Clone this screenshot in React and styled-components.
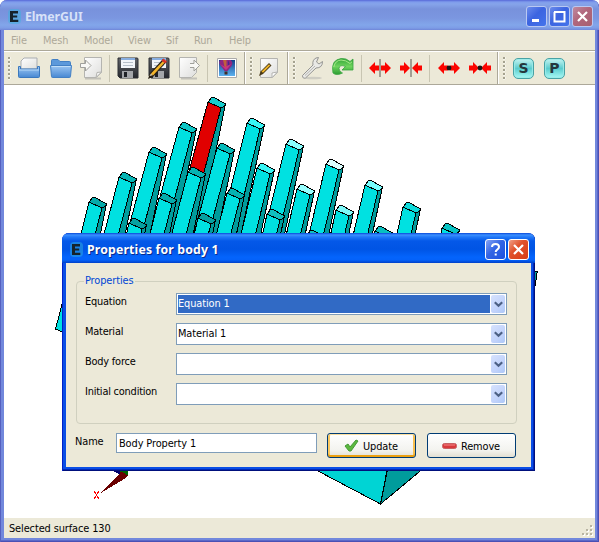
import React from "react";
import styled, { createGlobalStyle, css } from "styled-components";

const Global = createGlobalStyle`
  * { box-sizing: border-box; }
  body { margin: 0; background: #fff; overflow: hidden; }
  button, input { font: inherit; }
`;

const Window = styled.div`
  position: relative;
  width: 599px;
  height: 542px;
  display: flex;
  flex-direction: column;
  padding: 0 4px 4px;
  border-radius: 7px 7px 0 0;
  background: #7288dc;
  box-shadow: inset 1px 0 #5560c0, inset -1px -1px #4a50b4, inset -2px -2px #5c68c8;
  font: 10.9px/14px "DejaVu Sans Condensed", "DejaVu Sans", sans-serif;
  font-stretch: condensed;
  letter-spacing: -0.1px;
  color: #000;
  overflow: hidden;
`;

const TitleBar = styled.header`
  display: flex;
  align-items: center;
  flex: none;
  height: 30px;
  margin: 0 -4px;
  padding: 3px 6px 0 8px;
  border-radius: 7px 7px 0 0;
  color: #d8e2f8;
  background: linear-gradient(#5768d8 0, #7f9cec 2px, #86a4ea 4px, #7892dc 9px, #7b96e0 18px, #82a6ea 25px, #7d9ce6 28px, #6f86d8 30px);
`;

const Title = styled.h1`
  flex: 1;
  margin: 1px 0 0 4px;
  font: bold 12.3px/16px "Noto Sans", "Open Sans", sans-serif;
  font-stretch: normal;
  letter-spacing: ${(p) => p.$spacing || "0.15px"};
  ${(p) => p.$active && css`color: #fff; text-shadow: 1px 1px #0a2a8c;`}
`;

const CaptionButton = styled.button`
  display: grid;
  place-items: center;
  width: 21px;
  height: 21px;
  margin-left: 2px;
  padding: 0;
  border: 1px solid ${(p) => (p.$active ? "#fff" : "#b9c8f2")};
  border-radius: 3px;
  background: ${(p) =>
    p.$close
      ? p.$active
        ? "linear-gradient(135deg, #f0a088, #e0522c 40%, #d83c14)"
        : "linear-gradient(135deg, #c08aa0, #b0667c 45%, #a86070)"
      : p.$active
        ? "linear-gradient(135deg, #86a4f4, #3465e4 45%, #1c50e0)"
        : "linear-gradient(135deg, #6c8cec, #3c64e0 45%, #4474ec)"};
`;

const MenuBar = styled.nav`
  display: flex;
  flex: none;
  height: 21px;
  padding: 4px 0 0 7px;
  background: #ece9d8;
  border-bottom: 1px solid #aca899;
  color: #aca899;
`;

const MenuItem = styled.span`
  width: ${(p) => p.$w}px;
  flex: none;
  white-space: nowrap;
`;

const ToolBars = styled.div`
  display: flex;
  flex: none;
  height: 34px;
  background: #ece9d8;
  border-top: 1px solid #fff;
  border-bottom: 1px solid #aca899;
`;

const ToolGroup = styled.div`
  display: flex;
  align-items: center;
  width: ${(p) => p.$w}px;
  padding-left: 4px;
  border-right: ${(p) => (p.$last ? "0" : "1px solid #aca899")};
  border-left: ${(p) => (p.$first ? "0" : "1px solid #fff")};
`;

const Handle = styled.span`
  width: 3px;
  height: 23px;
  flex: none;
  margin-right: ${(p) => p.$gap}px;
  background: radial-gradient(circle at 1px 1px, #a5a28f 1px, #fff 1.2px, transparent 2px) 0 0 / 3px 4px;
`;

const Tool = styled.span`
  display: grid;
  place-items: center;
  width: ${(p) => p.$w || 31}px;
  height: 26px;
  flex: none;
`;

const Separator = styled.span`
  width: 1px;
  height: 27px;
  flex: none;
  margin: 0 ${(p) => p.$r ?? 3}px 0 ${(p) => p.$l ?? 3}px;
  background: #c8c5b2;
`;

const Viewport = styled.main`
  flex: 1;
  min-height: 0;
  background: #fff;
  svg { display: block; }
`;

const StatusBar = styled.footer`
  display: flex;
  flex: none;
  justify-content: space-between;
  height: 20px;
  padding: 4px 1px 0 5px;
  background: #ece9d8;
`;

const Dialog = styled.section`
  position: absolute;
  left: 62px;
  top: 233px;
  width: 473px;
  height: 238px;
  display: flex;
  flex-direction: column;
  padding: 0 4px 4px;
  border-radius: 7px 7px 0 0;
  background: #0a4ee6;
  box-shadow: inset 1px 0 #0020c8, inset -1px -1px #00107c, inset -2px -2px #0028b8;
`;

const DialogTitle = styled(TitleBar)`
  background: linear-gradient(#0848d8 0, #3c90ff 2px, #2078f8 4px, #0458e8 8px, #0054e4 16px, #0464fc 24px, #0462fa 27px, #0040c8 30px);
`;

const DialogBody = styled.div`
  flex: 1;
  padding: 11px 14px 0 10px;
  background: #ece9d8;
`;

const Group = styled.fieldset`
  height: 150px;
  margin: 0;
  padding: 0 9px 0 8px;
  border: 1px solid #d0d0bf;
  border-radius: 4px;
`;

const Legend = styled.legend`
  height: 14px;
  margin-bottom: 5px;
  margin-left: -1px;
  padding: 0 2px 0 1px;
  color: #0046d5;
`;

const Field = styled.label`
  display: grid;
  grid-template-columns: 91px 331px;
  height: 30px;
  align-items: start;
`;

const FieldName = styled.span`
  padding-top: 2px;
  letter-spacing: -0.2px;
`;

const Select = styled.span`
  display: flex;
  height: 22px;
  padding: 1px;
  border: 1px solid #7f9db9;
  background: #fff;
`;

const SelectValue = styled.span`
  flex: 1;
  padding: 2px 0 0 0;
  margin-right: 1px;
  ${(p) => p.$selected && css`background: #316ac5; color: #fff;`}
`;

const Arrow = styled.span`
  display: grid;
  place-items: center;
  width: 14px;
  border-radius: 2px;
  background: linear-gradient(135deg, #d6e2fd, #c2d3fb 60%, #adc8f7);
`;

const Actions = styled.div`
  display: flex;
  align-items: flex-start;
  padding-top: 9px;
`;

const NameLabel = styled.label`
  width: 40px;
  padding-top: 2px;
  margin-left: -1px;
`;

const NameInput = styled.input`
  width: 201px;
  height: 20px;
  margin-left: 1px;
  padding: 0 2px;
  border: 1px solid #7f9db9;
  border-radius: 0;
  outline: 0;
  letter-spacing: inherit;
`;

const PushButton = styled.button`
  display: flex;
  align-items: center;
  justify-content: center;
  gap: 4px;
  width: 89px;
  height: 25px;
  margin: 0 1px 0 10px;
  padding: 0 1px 0 0;
  border: 1px solid #003c74;
  border-radius: 3px;
  color: #000;
  letter-spacing: inherit;
  background: linear-gradient(#fff, #f3f3ef 70%, #e2dfd2);
  line-height: 23px;
  svg { flex: none; }
  ${(p) => p.$default && css`box-shadow: inset 0 1px #fde0a0, inset 0 -2px #eba010, inset 2px 0 #fac860, inset -2px 0 #f8c050;`}
`;

const ButtonText = styled.span`
  padding-top: 1px;
`;

const AppIcon = () => (
  <svg width="13" height="15" viewBox="0 0 13 15">
    <rect width="13" height="15" rx="4" fill="#36b6dd" opacity=".45" />
    <path d="M2 2h8v2.4H5v2h4.2v2.2H5v2.2h5.3V13H2z" fill="#15232c" />
  </svg>
);

const Glyph = ({ kind }) => (
  <svg width="15" height="15" viewBox="0 0 15 15" fill="none" stroke="#fff" strokeWidth="2">
    {kind === "min" && <path d="M3 11.5h7" strokeWidth="3" />}
    {kind === "max" && <path d="M2.5 3v9.5h10V2M2 3h11" />}
    {kind === "close" && <path d="M3 3l9 9M12 3l-9 9" strokeWidth="2.2" />}
    {kind === "help" && <path d="M4 5c0-4 7-4 7 0 0 2.5-3.3 2.5-3.3 5M7.7 11.5v2" />}
  </svg>
);

const Icon = ({ children }) => (
  <svg width="24" height="24" viewBox="0 0 24 24">{children}</svg>
);

const DefsHolder = styled.svg`
  position: absolute;
`;

const Defs = () => (
  <DefsHolder width="0" height="0">
    <defs>
      <linearGradient id="blue" x2="0" y2="1"><stop stopColor="#9cc6f3" /><stop offset="1" stopColor="#4788d2" /></linearGradient>
      <linearGradient id="paper" x2="1" y2="1"><stop stopColor="#fff" /><stop offset="1" stopColor="#dededc" /></linearGradient>
      <linearGradient id="disk" x2="0" y2="1"><stop stopColor="#62656b" /><stop offset="1" stopColor="#24262c" /></linearGradient>
      <linearGradient id="green" x2="0" y2="1"><stop stopColor="#2fa236" /><stop offset=".5" stopColor="#6fd45e" /><stop offset="1" stopColor="#2c9c31" /></linearGradient>
      <linearGradient id="sky" x2="0" y2="1"><stop stopColor="#123e8a" /><stop offset="1" stopColor="#5cb2ef" /></linearGradient>
    </defs>
  </DefsHolder>
);

const OpenIcon = () => (
  <Icon>
    <path d="M4 13V5l3-3h13v11z" fill="url(#paper)" stroke="#a9adb2" />
    <path d="M1.5 10.5h2V13h17v-2.5h2v10q0 1-1 1h-19q-1 0-1-1z" fill="url(#blue)" stroke="#3b78bd" />
    <path d="M2 14h20" stroke="#b8d9f8" />
  </Icon>
);
const FolderIcon = () => (
  <Icon>
    <path d="M2.5 12V4.5q0-1 1-1H9l2 2h9.5q1 0 1 1V12" fill="#5c99db" stroke="#4380c4" />
    <path d="M1.5 9.5h21l-1 11q0 1-1 1h-17q-1 0-1-1z" fill="url(#blue)" stroke="#4380c4" />
    <path d="M2.5 10.5h19" stroke="#c0def9" />
  </Icon>
);
const ImportIcon = () => (
  <Icon>
    <path d="M5 22.5h16" stroke="#999" opacity=".5" strokeWidth="2" />
    <path d="M4.5 1.5h17v15l-5 5h-12z" fill="url(#paper)" stroke="#b4b4b0" />
    <path d="M21.5 16l-5.500 5.500 1-5z" fill="#f8f8f8" stroke="#b4b4b0" />
    <path d="M.5 7.500h5V4l5.500 5.500-5.500 5.500V11.500h-5z" fill="#f8f8f5" stroke="#a0a09b" />
  </Icon>
);
const ExportIcon = () => (
  <Icon>
    <path d="M3 22.5h16" stroke="#999" opacity=".5" strokeWidth="2" />
    <path d="M1.5 1.500h17v15l-5 5h-12z" fill="url(#paper)" stroke="#b4b4b0" />
    <path d="M12 7.500h4V4l5.500 5.500-5.500 5.500V11.500h-4" fill="#f8f8f5" stroke="#a0a09b" />
  </Icon>
);
const Pencil = ({ transform }) => (
  <g transform={transform}>
    <path d="M2 22l2-6L17 2l3.500 3L7.500 19.500z" fill="#282015" />
    <path d="M5 16.500L17 4l1.800 1.500L7 18.500z" fill="#f4b52b" />
    <path d="M15.500 3.500L17.500 1.500l3.500 3-2 2z" fill="#d83328" />
    <path d="M3.500 19l1.500-2.500 1.500 1.800z" fill="#f5e2b9" />
  </g>
);
const NotePencil = () => (
  <g>
    <path d="M3 20l1.500-4.500L13 7l2.500 2.500L7 18z" fill="#4a3a18" />
    <path d="M5.500 15.500L13 8.200l1.200 1.200L7 16.800z" fill="#f0b52b" />
  </g>
);
const SaveIcon = ({ edit }) => (
  <Icon>
    <path d="M2 2h19q1 0 1 1v19H4l-2-2z" fill="url(#disk)" stroke="#2c2e34" />
    <path d="M5 2h14v10H5z" fill="#f2f5fa" />
    <path d="M5 2h14v2H5z" fill="#88aee0" />
    <path d="M7 6.500h10M7 9.500h10" stroke="#b6bfca" />
    <path d="M6 15h11v7H6z" fill="#a4a6aa" />
    <path d="M8 16h3v5H8z" fill="#202227" />
    {edit && <Pencil transform="translate(-1 1)" />}
  </Icon>
);
const BalloonIcon = () => (
  <Icon>
    <path d="M2.500 2.500h19v19h-19z" fill="#fff" stroke="#aaa" />
    <path d="M4 4h16v16H4z" fill="url(#sky)" />
    <path d="M4.500 8q-1-4 2-4h9q3 2 1 6l-4 5h-3z" fill="#8e2681" />
    <path d="M8 4l2 9 1.500-2V4z" fill="#c0613c" />
    <path d="M13 4.500q3 4 0 7z" fill="#46288d" />
    <path d="M5 8l5 3 6-3-3 4-2 2z" fill="#c9367f" />
    <path d="M9.500 15.500h3v3h-3z" fill="#442d27" />
  </Icon>
);
const EditIcon = () => (
  <Icon>
    <path d="M4.500 2.500h17v14l-5 5h-12z" fill="url(#paper)" stroke="#b4b4b0" />
    <path d="M21.500 16l-5.500 5.500v-4.500z" fill="#fff" stroke="#b4b4b0" />
    <NotePencil />
  </Icon>
);
const WrenchIcon = () => (
  <Icon>
    <ellipse cx="13" cy="22" rx="9" ry="1.300" fill="#aaa" opacity=".45" />
    <path d="M2.500 19.500L13 9q-1-5 3-7l2.500-.5-2 4.500 2.500 2 3.500-2.500q0 6.500-6.500 6.500L5.500 22q-3 1-3-2.500z" fill="#e9e9e6" stroke="#969693" />
    <path d="M5 19.500L15 10" stroke="#b5b5b2" />
  </Icon>
);
const RefreshIcon = () => (
  <Icon>
    <path d="M2 17Q-.5 4 10 2.500q5-.7 9 3l3-2.500v11H11l3.500-3.500q-6-2.500-6.500 2 0 3 3.500 4.500-6 3-9.500 0z" fill="url(#green)" stroke="#39a640" strokeWidth=".8" />
    <path d="M2.800 11Q4 4.500 10 4q5 0 9 3.500l2-1.700" stroke="#a6e788" fill="none" />
  </Icon>
);
const Arrows = ({ inward, dot }) => (
  <Icon>
    <path d={inward ? "M1 9.500h4V6l6 6-6 6v-3.500H1zM23 9.500h-4V6l-6 6 6 6v-3.500h4z" : "M1 12l6-6v3.500h4v5H7V18zM23 12l-6-6v3.500h-4v5h4V18z"} fill="#fb0500" />
    {dot ? <circle cx="12" cy="12" r="2.400" fill="#181818" /> : <path d="M12 3v18" stroke="#56524c" />}
  </Icon>
);

const Badge = styled.span`
  display: grid;
  place-items: center;
  width: 21px;
  height: 21px;
  border: 1px solid #48a2a4;
  border-radius: 5px;
  background: linear-gradient(#c8f4f1, #5accce 50%, #a8faf5);
  box-shadow: inset 0 0 1px 1px #9beae8;
  font: bold 14px/18px "DejaVu Sans", sans-serif;
  color: #26373d;
  letter-spacing: 0;
`;

// Front-left top corner of every column, ordered back to front.
const columns = [
  [208, 102, "#14cccc", 1], [179, 127], [149, 152, "#06bebe"], [119, 177, "#06b4b4"], [89, 202, "#06aaaa"],
  [247, 123, "#38f4f4"], [286, 144, "#88ffff"], [326, 164, "#dcffff"], [365, 185, "#78ffff"], [403, 207, "#0edada"], [442, 228, "#08c4c4"],
  [217, 148, "#06baba"], [257, 168, "#38f4f4"], [297, 189, "#98ffff"], [336, 210, "#7cf8f8"], [375, 231, "#08c0c0"],
  [188, 172, "#06b2b2"], [159, 198, "#06aaaa"], [129, 223, "#06a0a0"],
  [227, 193, "#06b2b2"], [267, 214, "#10c0c0"], [307, 235, "#10c0c0"],
  [198, 218, "#06a0a0"],
];

const Column = ({ x, y, cap = "#0cc4c4", red }) => {
  const h = 245 - y;
  const [left, mid, right] = x > 230 ? [0.26, 0.24, 0.215] : [0.285, 0.265, 0.205];
  return (
    <g stroke="#000" strokeWidth="1" strokeLinejoin="bevel">
      <path d={`M${x + 13} ${y + 6}L${x + 17.5} ${y + 2}l${-h * right} ${h}H${x + 13 - h * mid}z`} fill="#009c9c" />
      <path d={`M${x} ${y}l13 6l${-h * mid} ${h}H${x - h * left}z`} fill={red ? "#e10000" : "#00e1e1"} />
      <path d={`M${x} ${y}l3.500 -4.500h2.500l11.500 6.500l-1 2l-3.500 2z`} fill={cap} />
    </g>
  );
};

const Scene = () => (
  <svg width="591" height="433" viewBox="4 85 591 433" shapeRendering="crispEdges">
    {columns.map(([x, y, cap, red]) => <Column key={`${x}-${y}`} x={x} y={y} cap={cap} red={red} />)}
    <path d="M64 297l-8.500 32 9 4z" fill="#00e1e1" stroke="#000" />
    <path d="M533 271h4.500l-1 4-1 11z" fill="#009c9c" stroke="#000" />
    <path d="M317 470.500l63.500 33.500 6.500-33.500z" fill="#00d4d4" stroke="#000" />
    <path d="M387.500 470l-7 34 41-34z" fill="#009c9c" stroke="#000" />
    <path d="M112 470h8v5z" fill="#00006e" />
    <path d="M119 470h9v6l-6-1z" fill="#006400" />
    <path d="M100 493.500l18-18 3-4 7 4-3 3z" fill="#6a0000" />
    <path d="M94 491l5 8M99 491l-5 8" stroke="#f00" />
  </svg>
);

const fields = [["Equation", "Equation 1"], ["Material", "Material 1"], ["Body force", ""], ["Initial condition", ""]];
const menus = [["File", 32], ["Mesh", 41], ["Model", 44], ["View", 38], ["Sif", 28], ["Run", 35], ["Help", 30]];

export default function App() {
  return (
    <Window>
      <Global />
      <Defs />
      <TitleBar>
        <AppIcon />
        <Title $spacing="-0.1px">ElmerGUI</Title>
        <CaptionButton aria-label="Minimize"><Glyph kind="min" /></CaptionButton>
        <CaptionButton aria-label="Maximize"><Glyph kind="max" /></CaptionButton>
        <CaptionButton $close aria-label="Close"><Glyph kind="close" /></CaptionButton>
      </TitleBar>
      <MenuBar>{menus.map(([name, w]) => <MenuItem key={name} $w={w}>{name}</MenuItem>)}</MenuBar>
      <ToolBars>
        <ToolGroup $w={241} $first>
          <Handle $gap={2} />
          <Tool $w={32}><OpenIcon /></Tool><Tool><FolderIcon /></Tool><Tool><ImportIcon /></Tool>
          <Separator $l={2} $r={2} />
          <Tool><SaveIcon /></Tool><Tool><SaveIcon edit /></Tool><Tool><ExportIcon /></Tool>
          <Separator $l={2} $r={3} />
          <Tool><BalloonIcon /></Tool>
        </ToolGroup>
        <ToolGroup $w={43}><Handle $gap={0} /><Tool $w={30}><EditIcon /></Tool></ToolGroup>
        <ToolGroup $w={210}>
          <Handle $gap={1} />
          <Tool $w={30}><WrenchIcon /></Tool><Tool $w={32}><RefreshIcon /></Tool>
          <Separator $l={2} $r={2} />
          <Tool><Arrows /></Tool><Tool><Arrows inward /></Tool>
          <Separator $l={3} $r={3} />
          <Tool><Arrows dot /></Tool><Tool><Arrows inward dot /></Tool>
        </ToolGroup>
        <ToolGroup $w={97} $last>
          <Handle $gap={2} />
          <Tool><Badge>S</Badge></Tool><Tool><Badge>P</Badge></Tool>
        </ToolGroup>
      </ToolBars>
      <Viewport><Scene /></Viewport>
      <StatusBar>
        <span>Selected surface 130</span>
        <svg width="12" height="15" viewBox="0 0 12 15">
          {[[8, 3], [4, 7], [8, 7], [0, 11], [4, 11], [8, 11]].map(([x, y]) => (
            <g key={`${x}-${y}`}><path d={`M${x + 1} ${y + 1}h2v2h-2z`} fill="#fff" /><path d={`M${x} ${y}h2v2h-2z`} fill="#b8b4a2" /></g>
          ))}
        </svg>
      </StatusBar>
      <Dialog>
        <DialogTitle>
          <AppIcon />
          <Title as="h2" $active>Properties for body 1</Title>
          <CaptionButton $active aria-label="Help"><Glyph kind="help" /></CaptionButton>
          <CaptionButton $active $close aria-label="Close"><Glyph kind="close" /></CaptionButton>
        </DialogTitle>
        <DialogBody>
          <Group>
            <Legend>Properties</Legend>
            {fields.map(([name, value], i) => (
              <Field key={name}>
                <FieldName>{name}</FieldName>
                <Select>
                  <SelectValue $selected={i === 0}>{value}</SelectValue>
                  <Arrow><svg width="9" height="7" viewBox="0 0 9 7"><path d="M.8 1.200l3.700 3.600 3.700-3.600" fill="none" stroke="#4d6185" strokeWidth="2.200" /></svg></Arrow>
                </Select>
              </Field>
            ))}
          </Group>
          <Actions>
            <NameLabel>Name</NameLabel>
            <NameInput defaultValue="Body Property 1" />
            <PushButton $default>
              <svg width="15" height="14" viewBox="0 0 15 14"><path d="M1 7l3-2 2 3 6-7 2 1-7 10H5z" fill="#5cb83e" stroke="#429a35" /></svg>
              <ButtonText>Update</ButtonText>
            </PushButton>
            <PushButton>
              <svg width="15" height="8" viewBox="0 0 15 8"><rect x=".5" y="1.500" width="14" height="5" rx="2" fill="#d8393c" stroke="#c76264" /><path d="M2 3h11" stroke="#f48b8b" /></svg>
              <ButtonText>Remove</ButtonText>
            </PushButton>
          </Actions>
        </DialogBody>
      </Dialog>
    </Window>
  );
}
